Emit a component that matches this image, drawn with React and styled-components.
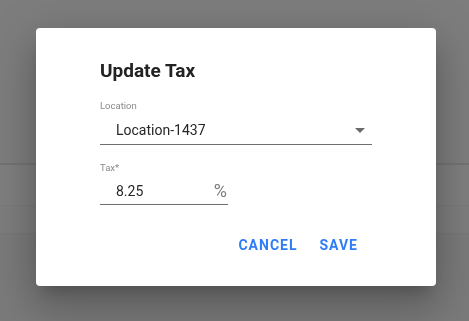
import React from "react";
import styled, { createGlobalStyle } from "styled-components";

const GlobalStyle = createGlobalStyle`
  html, body {
    margin: 0;
    padding: 0;
    height: 100%;
    overflow: hidden;
  }
  body {
    font-family: "Roboto", "Liberation Sans", Arial, sans-serif;
    background: #7c7c7c;
  }
`;

const Page = styled.div`
  display: flex;
  flex-direction: column;
  height: 321px;
  background: #7c7c7c;
`;

const PageBand = styled.div`
  height: ${(props) => props.size}px;
  background: ${(props) => props.bg};
  border-bottom: ${(props) => props.line || "none"};
  flex: ${(props) => (props.grow ? 1 : "none")};
`;

const Backdrop = styled.div`
  position: fixed;
  inset: 0;
  display: flex;
  align-items: flex-start;
  justify-content: flex-start;
  padding: 28px 0 0 36px;
`;

const Dialog = styled.div`
  width: 400px;
  height: 258px;
  box-sizing: border-box;
  background: #fff;
  border-radius: 4px;
  padding: 31px 64px 0 64px;
  display: flex;
  flex-direction: column;
  box-shadow: 0 11px 15px -7px rgba(0, 0, 0, 0.2),
    0 24px 38px 3px rgba(0, 0, 0, 0.14), 0 9px 46px 8px rgba(0, 0, 0, 0.12);
`;

const Title = styled.h2`
  margin: 0;
  font-size: 19px;
  line-height: 24px;
  font-weight: 700;
  color: #222;
`;

const Field = styled.div`
  display: flex;
  flex-direction: column;
  width: ${(props) => props.width};
  margin-top: ${(props) => props.top}px;
`;

const Label = styled.label`
  font-size: 9.5px;
  line-height: 12px;
  color: #8a8a8a;
`;

const InputRow = styled.div`
  display: flex;
  align-items: center;
  margin-top: ${(props) => props.gap}px;
  padding: 0 0 ${(props) => props.pb}px 16px;
  border-bottom: 1px solid #6e6e6e;
`;

const Value = styled.span`
  flex: 1;
  font-size: 14px;
  line-height: 20px;
  color: #262626;
`;

const Adornment = styled.span`
  font-size: 18px;
  line-height: 21px;
  margin-right: 1px;
  color: #7a7a7a;
`;

const Arrow = styled.svg`
  width: 10px;
  height: 5px;
  margin-right: 7px;
  fill: #6a6a6a;
`;

const Actions = styled.div`
  display: flex;
  justify-content: flex-end;
  gap: 6px;
  margin-top: 22px;
  margin-right: 6px;
`;

const Button = styled.button`
  border: none;
  background: transparent;
  padding: 6px 8px;
  font-family: "Roboto", "Liberation Sans", Arial, sans-serif;
  font-size: 14px;
  font-weight: 700;
  line-height: 24.5px;
  letter-spacing: 1px;
  text-transform: uppercase;
  color: #2f7df6;
  cursor: pointer;
`;

export default function App() {
  return (
    <>
      <GlobalStyle />
      <Page>
        <PageBand size={163} bg="#7d7d7d" line="2px solid #737373" />
        <PageBand size={40} bg="#7e7e7e" line="1px solid #797979" />
        <PageBand size={27} bg="#7d7d7d" line="1px solid #787878" />
        <PageBand grow bg="#7a7a7a" />
      </Page>
      <Backdrop>
        <Dialog>
          <Title>Update Tax</Title>
          <Field width="100%" top={17}>
            <Label>Location</Label>
            <InputRow gap={8} pb={4}>
              <Value>Location-1437</Value>
              <Arrow viewBox="0 0 10 5">
                <path d="M0 0 L10 0 L5 5 Z" />
              </Arrow>
            </InputRow>
          </Field>
          <Field width="128px" top={17}>
            <Label>Tax*</Label>
            <InputRow gap={6} pb={3}>
              <Value>8.25</Value>
              <Adornment>%</Adornment>
            </InputRow>
          </Field>
          <Actions>
            <Button>Cancel</Button>
            <Button>Save</Button>
          </Actions>
        </Dialog>
      </Backdrop>
    </>
  );
}
